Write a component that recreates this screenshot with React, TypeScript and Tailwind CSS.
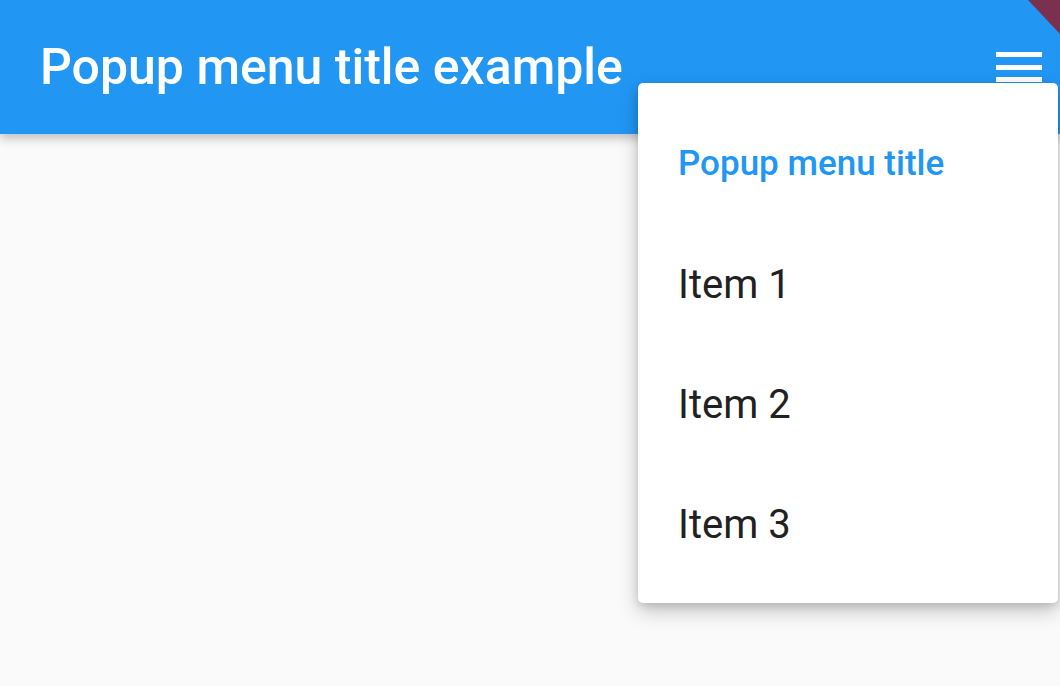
import { ReactNode } from 'react'

const items = ['Item 1', 'Item 2', 'Item 3']

function MenuRow({ children, title = false }: { children: ReactNode; title?: boolean }) {
  return (
    <div
      className={
        title
          ? 'h-[120px] flex items-center px-[40px] pt-[2px] text-[35px] font-medium text-[#2196f3]'
          : 'h-[120px] flex items-center px-[40px] pt-[3px] text-[40px] text-[#212121]'
      }
    >
      {children}
    </div>
  )
}

export default function App() {
  return (
    <div
      className="relative w-[1060px] h-[686px] overflow-hidden bg-[#fafafa] flex flex-col"
      style={{ fontFamily: 'Roboto, "Noto Sans", sans-serif' }}
    >
      {/* App bar */}
      <header className="h-[134px] bg-[#2196f3] flex items-center justify-between pl-[40px] pr-[11px] shadow-[0_4px_10px_rgba(0,0,0,0.25)] z-10">
        <h1 className="text-[50px] font-medium text-white leading-none">Popup menu title example</h1>
        <button className="w-[60px] h-[60px] flex flex-col justify-center items-center gap-[7.5px]">
          <span className="block w-[46px] h-[5px] bg-white" />
          <span className="block w-[46px] h-[5px] bg-white" />
          <span className="block w-[46px] h-[5px] bg-white" />
        </button>
      </header>

      <main className="flex-1" />

      {/* Popup menu */}
      <div className="absolute left-[638px] top-[83px] w-[420px] py-[20px] bg-white rounded-[5px] shadow-[0_8px_20px_rgba(0,0,0,0.22),0_3px_8px_rgba(0,0,0,0.12)] z-20">
        <MenuRow title>Popup menu title</MenuRow>
        {items.map((item) => (
          <MenuRow key={item}>{item}</MenuRow>
        ))}
      </div>

      {/* Debug banner corner */}
      <svg className="absolute right-0 top-0 z-30" width="32" height="34" viewBox="0 0 32 34">
        <polygon points="0,0 32,0 32,34" fill="#7b3050" />
      </svg>
    </div>
  )
}
